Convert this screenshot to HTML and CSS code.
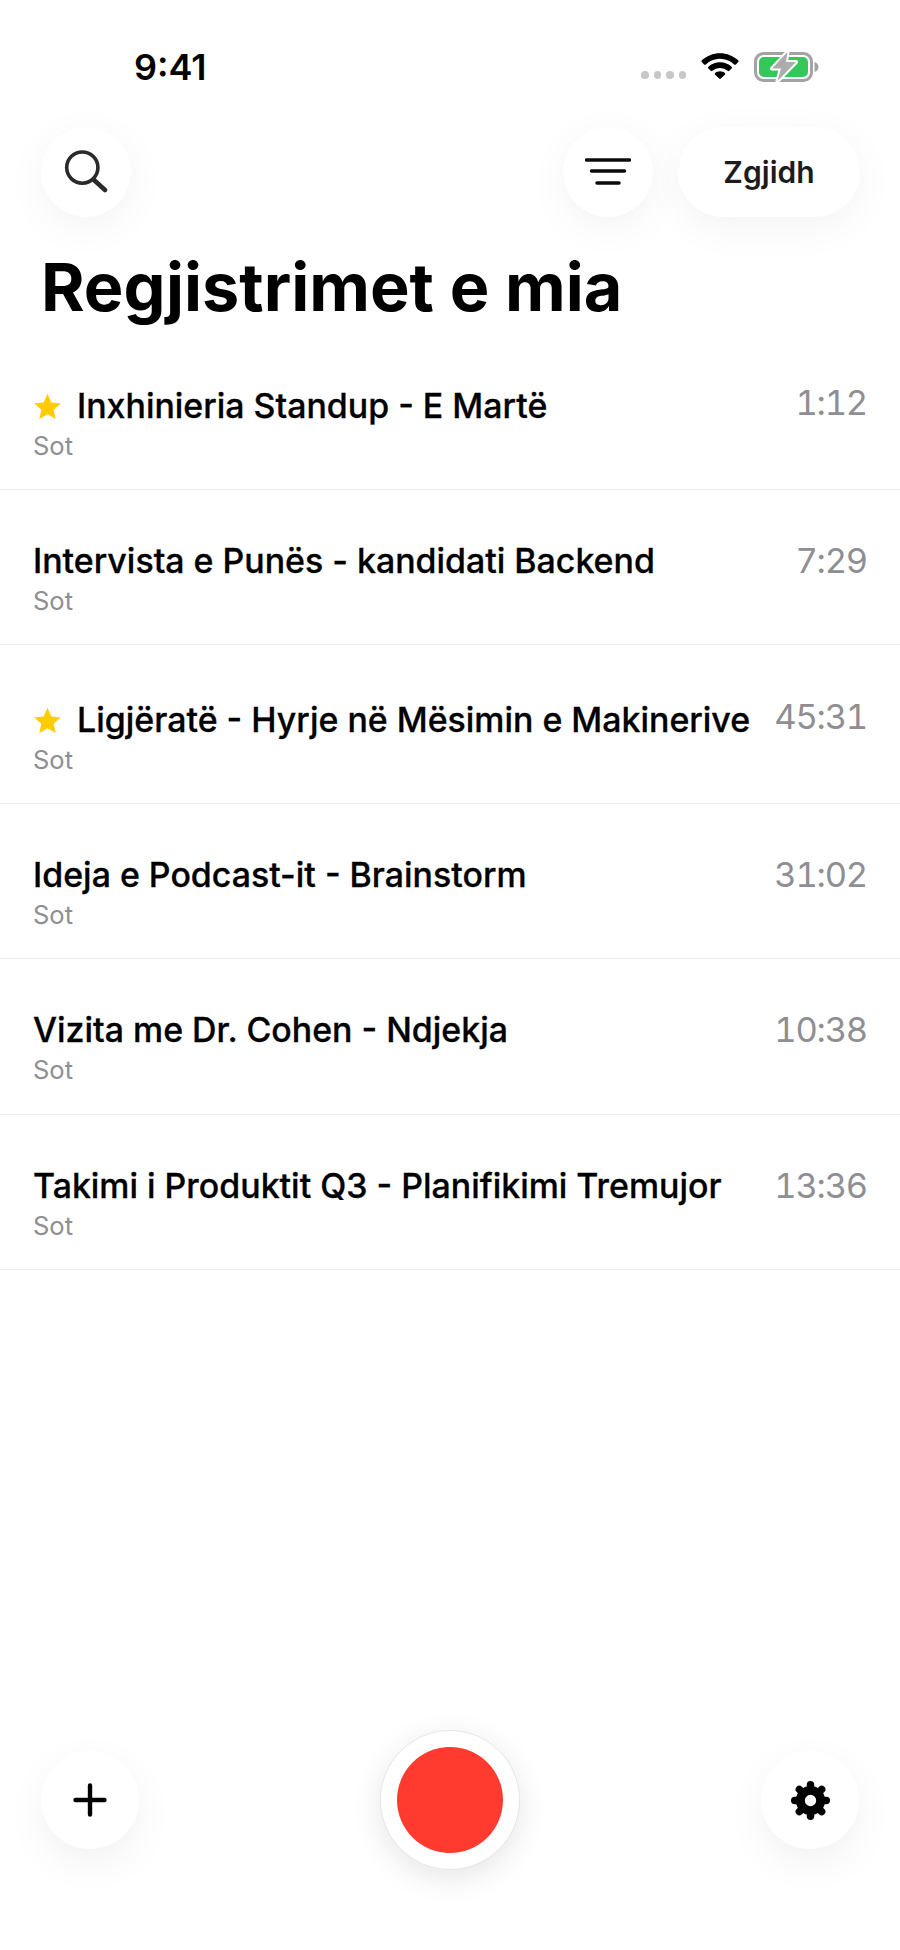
FILE: index.html
```html
<!DOCTYPE html>
<html lang="sq">
<head>
<meta charset="utf-8">
<title>Regjistrimet e mia</title>
<link rel="stylesheet" href="styles.css">
</head>
<body>
<div class="page">
  <div class="status">
    <span class="time">9:41</span>
    <div class="status-icons">
      <div class="dots"><i></i><i></i><i></i><i></i></div>
      <svg class="wifi" width="40" height="28" viewBox="0 0 40 28"><path d="M20 2.200c-7 0-13.400 2.700-18.200 7.100a1.300 1.300 0 0 0 0 1.800l2.200 2.300c.5.500 1.300.5 1.800 0C9.600 9.800 14.500 7.700 20 7.700s10.400 2.100 14.200 5.700c.5.500 1.300.5 1.800 0l2.200-2.300a1.300 1.300 0 0 0 0-1.800C33.400 4.900 27 2.200 20 2.200z"/><path d="M20 11.200c-4.500 0-8.500 1.700-11.600 4.500a1.200 1.200 0 0 0 0 1.800l2.300 2.300c.5.500 1.200.5 1.700 0 2-1.700 4.700-2.800 7.600-2.800s5.600 1.100 7.600 2.800c.5.500 1.200.5 1.700 0l2.300-2.300a1.200 1.200 0 0 0 0-1.800c-3.100-2.800-7.100-4.500-11.600-4.500z"/><path d="M20 20.300c-2 0-3.700.7-5 1.900-.4.400-.4 1-.1 1.300l4.300 4.100c.4.400 1.200.4 1.600 0l4.300-4.100c.3-.3.300-.9-.1-1.300-1.300-1.200-3-1.900-5-1.900z"/></svg>
      <svg class="battery" width="66" height="32" viewBox="0 0 66 32">
        <rect x="1.500" y="2.500" width="56" height="27" rx="8" fill="none" stroke="#a3a3a3" stroke-width="3"/>
        <rect x="5" y="6" width="49" height="20" rx="5" fill="#34c759"/>
        <path d="M60.500 11v10c2.500-.6 4-2.700 4-5s-1.500-4.400-4-5z" fill="#a3a3a3"/>
        <path d="M33.500 1 18 17.500h9L23.500 30 42 11H32z" fill="#fff" stroke="#fff" stroke-width="4" stroke-linejoin="round"/>
        <path d="M33.500 1 18 17.500h9L23.500 30 42 11H32z" fill="#acacac"/>
      </svg>
    </div>
  </div>

  <header class="toolbar">
    <button class="round-btn" aria-label="Kërko">
      <svg width="44" height="46" viewBox="0 0 44 46" fill="none" stroke="#2a2a2c" stroke-width="3.600" stroke-linecap="round"><circle cx="18.300" cy="18.600" r="15.600"/><path d="M30 31l11 10" stroke-width="4.500"/></svg>
    </button>
    <div class="toolbar-right">
      <button class="round-btn" aria-label="Filtro">
        <svg width="46" height="28" viewBox="0 0 46 28" stroke="#0a0a0a" stroke-linecap="round" fill="none"><path d="M1.500 2h43" stroke-width="3.400"/><path d="M6.500 13h33" stroke-width="3.400"/><path d="M12 25h22" stroke-width="3.400"/></svg>
      </button>
      <button class="pill-btn">Zgjidh</button>
    </div>
  </header>

  <h1 class="title">Regjistrimet e mia</h1>

  <ul class="list">
    <li class="row row-star">
      <div class="row-main">
        <div class="row-title"><svg class="star" width="29" height="29" viewBox="0 0 24 24"><path d="M12 1.500l3.200 7.200 7.800.8-5.900 5.200 1.700 7.700L12 18.400l-6.800 4 1.700-7.700L1 9.500l7.800-.8z" fill="#ffcc00"/></svg><span>Inxhinieria Standup - E Martë</span></div>
        <div class="row-date">Sot</div>
      </div>
      <div class="row-time">1:12</div>
    </li>
    <li class="row">
      <div class="row-main">
        <div class="row-title"><span>Intervista e Punës - kandidati Backend</span></div>
        <div class="row-date">Sot</div>
      </div>
      <div class="row-time">7:29</div>
    </li>
    <li class="row row-star">
      <div class="row-main">
        <div class="row-title"><svg class="star" width="29" height="29" viewBox="0 0 24 24"><path d="M12 1.500l3.200 7.200 7.800.8-5.900 5.200 1.700 7.700L12 18.400l-6.800 4 1.700-7.700L1 9.500l7.800-.8z" fill="#ffcc00"/></svg><span>Ligjëratë - Hyrje në Mësimin e Makinerive</span></div>
        <div class="row-date">Sot</div>
      </div>
      <div class="row-time">45:31</div>
    </li>
    <li class="row">
      <div class="row-main">
        <div class="row-title"><span>Ideja e Podcast-it - Brainstorm</span></div>
        <div class="row-date">Sot</div>
      </div>
      <div class="row-time">31:02</div>
    </li>
    <li class="row">
      <div class="row-main">
        <div class="row-title"><span>Vizita me Dr. Cohen - Ndjekja</span></div>
        <div class="row-date">Sot</div>
      </div>
      <div class="row-time">10:38</div>
    </li>
    <li class="row">
      <div class="row-main">
        <div class="row-title"><span>Takimi i Produktit Q3 - Planifikimi Tremujor</span></div>
        <div class="row-date">Sot</div>
      </div>
      <div class="row-time">13:36</div>
    </li>
  </ul>

  <footer class="bottom">
    <button class="round-btn round-lg" aria-label="Shto">
      <svg width="36" height="36" viewBox="0 0 36 36" stroke="#000" stroke-width="4.400" stroke-linecap="round"><path d="M18 3.500v29M3.500 18h29"/></svg>
    </button>
    <button class="record" aria-label="Regjistro"><span class="record-dot"></span></button>
    <button class="round-btn round-lg" aria-label="Cilësimet">
      <svg width="39" height="39" viewBox="-20 -20 40 40" fill="none" stroke="#000">
        <circle r="10.400" stroke-width="9.200"/>
        <g stroke-width="7.600" stroke-linecap="round">
          <path d="M0-14v-2.200"/>
          <path d="M0-14v-2.200" transform="rotate(45)"/>
          <path d="M0-14v-2.200" transform="rotate(90)"/>
          <path d="M0-14v-2.200" transform="rotate(135)"/>
          <path d="M0-14v-2.200" transform="rotate(180)"/>
          <path d="M0-14v-2.200" transform="rotate(225)"/>
          <path d="M0-14v-2.200" transform="rotate(270)"/>
          <path d="M0-14v-2.200" transform="rotate(315)"/>
        </g>
      </svg>
    </button>
  </footer>
</div>
</body>
</html>
```
FILE: styles.css
```css
* { box-sizing: border-box; }
html, body { margin: 0; padding: 0; background: #fff; }
body { font-family: Inter, "Liberation Sans", sans-serif; color: #000; }
button { font-family: inherit; border: 0; padding: 0; cursor: pointer; }

.page {
  width: 900px;
  height: 1950px;
  display: flex;
  flex-direction: column;
  overflow: hidden;
}

.status {
  height: 127px;
  padding: 46px 80px 0 134px;
  display: flex;
  justify-content: space-between;
  align-items: flex-start;
}
.time { font-size: 36px; font-weight: 600; line-height: 42px; }
.status-icons { display: flex; align-items: flex-start; padding-top: 5px; }
.dots { display: flex; gap: 5px; margin-top: 20px; margin-right: 14px; }
.dots i { width: 7.500px; height: 8px; border-radius: 50%; background: #c7c7c7; display: block; }
.wifi { margin-right: 14px; }

.toolbar {
  height: 90px;
  padding: 0 40px 0 41px;
  display: flex;
  justify-content: space-between;
}
.toolbar-right { display: flex; gap: 25px; }
.round-btn {
  width: 90px;
  height: 90px;
  border-radius: 50%;
  background: #fff;
  box-shadow: 0 10px 40px rgba(0, 0, 0, 0.05);
  display: flex;
  align-items: center;
  justify-content: center;
}
.pill-btn {
  width: 182px;
  height: 90px;
  border-radius: 45px;
  background: #fff;
  box-shadow: 0 10px 40px rgba(0, 0, 0, 0.05);
  font-size: 30px;
  font-weight: 600;
  color: #1c1c1e;
}

.title {
  margin: 30px 0 0 41px;
  font-size: 66.500px;
  line-height: 80px;
  font-weight: 700;
}

.list { list-style: none; margin: 4px 0 0; padding: 0; }
.row {
  height: 155.200px;
  padding: 49px 33px 0;
  display: flex;
  justify-content: space-between;
  border-bottom: 1px solid #ececec;
}
.row-star { height: 159px; padding-top: 53px; }
.row-title {
  display: flex;
  align-items: center;
  gap: 15px;
  font-size: 33.900px;
  line-height: 44px;
  font-weight: 500;
  -webkit-text-stroke: 0.3px #000;
  white-space: nowrap;
}
.star { flex: none; }
.row-date { font-size: 25.500px; line-height: 30px; color: #8e8e93; margin-top: 3px; }
.row-time { font-size: 34.500px; line-height: 44px; letter-spacing: -1.200px; color: #8e8e93; font-variant-numeric: tabular-nums; }
.row-star .row-time { margin-top: -3px; }

.bottom {
  margin-top: auto;
  height: 140px;
  margin-bottom: 80px;
  padding: 0 41px;
  display: flex;
  justify-content: space-between;
  align-items: center;
}
.round-lg { width: 98px; height: 98px; box-shadow: 0 14px 40px rgba(0, 0, 0, 0.055); }
.record {
  width: 140px;
  height: 140px;
  border-radius: 50%;
  background: #fff;
  border: 1px solid #e6e6e6;
  box-shadow: 0 8px 30px rgba(0, 0, 0, 0.1);
  display: flex;
  align-items: center;
  justify-content: center;
}
.record-dot { width: 106px; height: 106px; border-radius: 50%; background: #ff3b30; display: block; }
```
